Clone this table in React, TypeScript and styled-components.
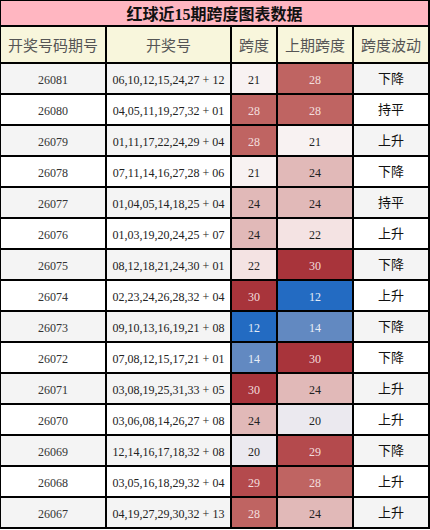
import React from "react";
import styled, { createGlobalStyle } from "styled-components";

const Global = createGlobalStyle`
  html, body { margin: 0; padding: 0; background: #fff; }
  body { font-family: "Liberation Serif", "Noto Sans CJK SC", serif; }
`;

const Table = styled.div`
  width: 430px;
  box-sizing: border-box;
  background: #000;
  padding: 1px 2px 2px 1px;
  display: grid;
  grid-template-columns: 104px 123px 44px 74px 74px;
  grid-template-rows: 24px 35px repeat(15, 29px);
  gap: 2px;
`;

const Title = styled.div`
  grid-column: 1 / -1;
  background: #ffb6c1;
  display: flex;
  align-items: center;
  justify-content: center;
  font-size: 16px;
  font-weight: bold;
  color: #111;
  font-family: "Liberation Serif", "Noto Sans CJK SC", serif;
`;

const Head = styled.div`
  background: #f8f6dc;
  display: flex;
  align-items: center;
  justify-content: center;
  font-size: 15px;
  color: #555;
  font-family: "Noto Sans CJK SC", sans-serif;
`;

const Cell = styled.div<{ $bg: string; $fg?: string; $cjk?: boolean }>`
  background: ${(p) => p.$bg};
  color: ${(p) => p.$fg ?? "#222"};
  display: flex;
  align-items: center;
  justify-content: center;
  padding: ${(p) => (p.$cjk ? "0 0 3px" : "2px 0 0")};
  line-height: 1;
  box-sizing: border-box;
  font-size: ${(p) => (p.$cjk ? "13px" : "12px")};
  font-family: ${(p) =>
    p.$cjk ? `"Noto Sans CJK SC", sans-serif` : `"Liberation Serif", "Noto Sans CJK SC", serif`};
`;

const heat: Record<number, [string, string]> = {
  12: ["#236bc2", "#e4ecf6"],
  14: ["#6289c1", "#e8eef6"],
  20: ["#ebe9ef", "#222"],
  21: ["#f8f2f2", "#222"],
  22: ["#f4e3e3", "#222"],
  24: ["#e1b9b8", "#222"],
  28: ["#bf6462", "#f3dede"],
  29: ["#b44a4d", "#f3dede"],
  30: ["#a8343b", "#f3dede"],
};

const rows: [string, string, number, number, string][] = [
  ["26081", "06,10,12,15,24,27 + 12", 21, 28, "下降"],
  ["26080", "04,05,11,19,27,32 + 01", 28, 28, "持平"],
  ["26079", "01,11,17,22,24,29 + 04", 28, 21, "上升"],
  ["26078", "07,11,14,16,27,28 + 06", 21, 24, "下降"],
  ["26077", "01,04,05,14,18,25 + 04", 24, 24, "持平"],
  ["26076", "01,03,19,20,24,25 + 07", 24, 22, "上升"],
  ["26075", "08,12,18,21,24,30 + 01", 22, 30, "下降"],
  ["26074", "02,23,24,26,28,32 + 04", 30, 12, "上升"],
  ["26073", "09,10,13,16,19,21 + 08", 12, 14, "下降"],
  ["26072", "07,08,12,15,17,21 + 01", 14, 30, "下降"],
  ["26071", "03,08,19,25,31,33 + 05", 30, 24, "上升"],
  ["26070", "03,06,08,14,26,27 + 08", 24, 20, "上升"],
  ["26069", "12,14,16,17,18,32 + 08", 20, 29, "下降"],
  ["26068", "03,05,16,18,29,32 + 04", 29, 28, "上升"],
  ["26067", "04,19,27,29,30,32 + 13", 28, 24, "上升"],
];

const headers = ["开奖号码期号", "开奖号", "跨度", "上期跨度", "跨度波动"];

export default function App() {
  return (
    <>
      <Global />
      <Table>
        <Title>红球近15期跨度图表数据</Title>
        {headers.map((h) => (
          <Head key={h}>{h}</Head>
        ))}
        {rows.map(([issue, nums, span, prev, trend], i) => {
          const bg = i % 2 === 0 ? "#f4f4f4" : "#ffffff";
          const [sb, sf] = heat[span];
          const [pb, pf] = heat[prev];
          return (
            <React.Fragment key={issue}>
              <Cell $bg={bg} $fg="#333">{issue}</Cell>
              <Cell $bg={bg} $fg="#222">{nums}</Cell>
              <Cell $bg={sb} $fg={sf}>{span}</Cell>
              <Cell $bg={pb} $fg={pf}>{prev}</Cell>
              <Cell $bg={bg} $fg="#111" $cjk>{trend}</Cell>
            </React.Fragment>
          );
        })}
      </Table>
    </>
  );
}
